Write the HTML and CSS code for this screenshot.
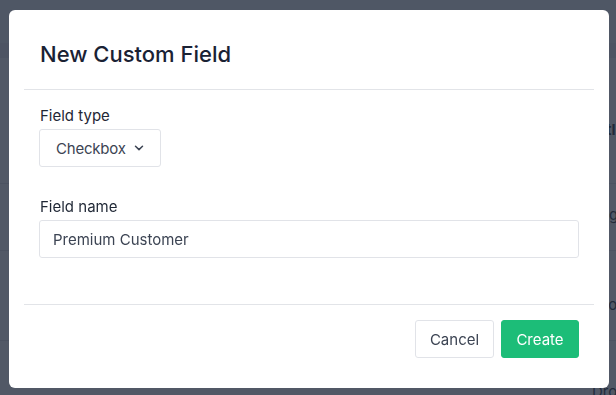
FILE: index.html
```html
<!DOCTYPE html>
<html lang="en">
<head>
<meta charset="utf-8">
<title>New Custom Field</title>
<link rel="stylesheet" href="styles.css">
</head>
<body>
  <div class="page">
    <div class="page-top"></div>
    <div class="page-bar"></div>
    <div class="page-table">
      <div class="row row-a"><span class="cell cell-strong">Title</span></div>
      <div class="row row-b"><span class="cell">Tag</span></div>
      <div class="row row-c"><span class="cell">Drop</span></div>
      <div class="row row-d"><span class="cell">Drop</span></div>
    </div>
  </div>

  <div class="overlay">
    <div class="modal">
      <div class="modal-header">
        <h2 class="modal-title">New Custom Field</h2>
      </div>
      <div class="modal-body">
        <div class="field">
          <label class="field-label">Field type</label>
          <button class="select" type="button">
            <span>Checkbox</span>
            <svg class="chevron" width="10" height="6" viewBox="0 0 10 6" aria-hidden="true">
              <path d="M1.5 1.2 L5 4.6 L8.5 1.2" fill="none" stroke="#3c4453" stroke-width="1.5" stroke-linecap="round" stroke-linejoin="round"/>
            </svg>
          </button>
        </div>
        <div class="field">
          <label class="field-label">Field name</label>
          <div class="input">Premium Customer</div>
        </div>
      </div>
      <div class="modal-footer">
        <button class="btn btn-secondary" type="button">Cancel</button>
        <button class="btn btn-primary" type="button">Create</button>
      </div>
    </div>
  </div>
</body>
</html>
```

FILE: styles.css
```css
* {
  box-sizing: border-box;
}

html, body {
  margin: 0;
  padding: 0;
  height: 100%;
}

body {
  font-family: Inter, "Open Sans", "Liberation Sans", sans-serif;
  background: #ffffff;
  overflow: hidden;
}

/* dimmed page behind the dialog */
.page {
  height: 395px;
  background: #ffffff;
}

.page-top {
  height: 43px;
  background: #f6f7f9;
}

.page-bar {
  height: 15px;
  background: #e9ebef;
}

.page-table {
  display: flex;
  flex-direction: column;
}

.row {
  border-bottom: 1px solid #dfe2e7;
  display: flex;
  align-items: flex-start;
  padding-left: 592px;
  color: #111827;
  font-size: 15px;
  line-height: 20px;
}

.cell {
  white-space: nowrap;
}

.cell-strong {
  font-weight: 700;
}

.row-a { height: 126px; padding-top: 62px; }
.row-b { height: 67px; padding-top: 21px; }
.row-c { height: 90px; padding-top: 44px; }
.row-d { height: 60px; padding-top: 41px; border-bottom: 0; }

.overlay {
  position: fixed;
  inset: 0;
  background: rgba(38, 46, 64, 0.8);
  padding: 10px 7px 7px 9px;
}

.modal {
  width: 600px;
  height: 378px;
  background: #ffffff;
  border-radius: 6px;
  display: flex;
  flex-direction: column;
}

.modal-header {
  margin: 0 15px;
  padding: 0 15px;
  height: 80px;
  border-bottom: 1px solid #e2e4e8;
  display: flex;
  align-items: flex-start;
}

.modal-title {
  margin: 33px 0 0 1px;
  font-size: 22px;
  line-height: 22px;
  font-weight: 500;
  color: #1a2234;
  letter-spacing: 0;
}

.modal-body {
  padding: 16px 30px 0;
  display: flex;
  flex-direction: column;
  gap: 30px;
  height: 214px;
}

.field {
  display: flex;
  flex-direction: column;
  align-items: flex-start;
  gap: 3px;
}

.field-label {
  font-size: 15px;
  line-height: 20px;
  color: #1f2735;
  padding-left: 1px;
}

.select {
  height: 38px;
  width: 122px;
  padding: 0 0 0 16px;
  border: 1px solid #e1e3e8;
  border-radius: 3px;
  background: #ffffff;
  font-family: inherit;
  font-size: 15px;
  letter-spacing: -0.2px;
  color: #3c4453;
  display: flex;
  align-items: center;
  gap: 8px;
}

.chevron {
  display: block;
}

.input {
  align-self: stretch;
  height: 38px;
  padding: 0 13px;
  border: 1px solid #e1e3e8;
  border-radius: 3px;
  font-size: 15px;
  color: #3c4453;
  display: flex;
  align-items: center;
}

.modal-footer {
  margin: 0 15px;
  padding: 15px 15px 0;
  border-top: 1px solid #e2e4e8;
  display: flex;
  justify-content: flex-end;
  gap: 7px;
  flex: 1;
}

.btn {
  height: 38px;
  border-radius: 3px;
  font-family: inherit;
  font-size: 15px;
  padding: 0;
  cursor: pointer;
}

.btn-secondary {
  width: 79px;
  background: #ffffff;
  border: 1px solid #e1e3e8;
  color: #3c4453;
}

.btn-primary {
  width: 78px;
  background: #1cbd78;
  border: 1px solid #1cbd78;
  color: #ffffff;
}
```
